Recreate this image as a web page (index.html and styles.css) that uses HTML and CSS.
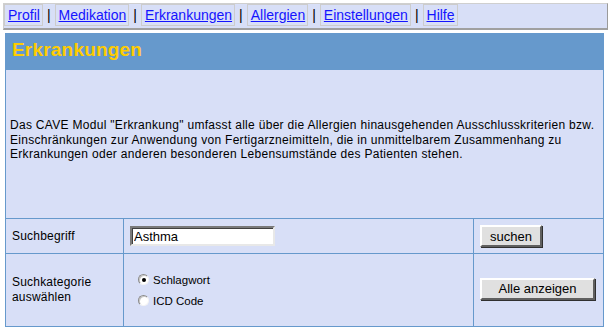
FILE: index.html
```html
<!DOCTYPE html>
<html lang="de">
<head>
    <meta charset="UTF-8">
    <title>CAVE - Erkrankungen</title>
    <link rel="stylesheet" href="styles.css">
</head>
<body>
    <div class="nav">
        <a class="tab" href="#">Profil</a><span class="sep">|</span>
        <a class="tab" href="#">Medikation</a><span class="sep">|</span>
        <a class="tab" href="#">Erkrankungen</a><span class="sep">|</span>
        <a class="tab" href="#">Allergien</a><span class="sep">|</span>
        <a class="tab" href="#">Einstellungen</a><span class="sep">|</span>
        <a class="tab" href="#">Hilfe</a>
    </div>

    <div class="panel">
        <h1 class="panel-head">Erkrankungen</h1>
        <form class="form" onsubmit="return false">
            <table class="grid">
                <tr>
                    <td class="desc" colspan="3">
                        Das CAVE Modul "Erkrankung" umfasst alle über die Allergien hinausgehenden Ausschlusskriterien bzw.<br>
                        Einschränkungen zur Anwendung von Fertigarzneimitteln, die in unmittelbarem Zusammenhang zu<br>
                        Erkrankungen oder anderen besonderen Lebensumstände des Patienten stehen.
                    </td>
                </tr>
                <tr class="row-search">
                    <td class="label">Suchbegriff</td>
                    <td class="field"><input class="text" type="text" value="Asthma"></td>
                    <td class="action"><button class="btn btn-search">suchen</button></td>
                </tr>
                <tr class="row-category">
                    <td class="label">Suchkategorie<br>auswählen</td>
                    <td class="field">
                        <label class="option"><input type="radio" name="kat" checked> Schlagwort</label>
                        <label class="option"><input type="radio" name="kat"> ICD Code</label>
                    </td>
                    <td class="action"><button class="btn btn-all">Alle anzeigen</button></td>
                </tr>
            </table>
        </form>
    </div>
</body>
</html>
```

FILE: styles.css
```css
body {
    margin: 3px 0 0 3px;
    background-color: #ffffff;
    font-family: "Liberation Sans", Arial, sans-serif;
    color: #000000;
}
.nav {
    width: 603px;
    display: flex;
    align-items: center;
    background-color: #d8dff7;
    border-top: 1px solid #cfcfcf;
    border-left: 1px solid #cfcfcf;
    border-right: 1px solid #9a9a9a;
    border-bottom: 2px solid #a0a0a0;
    padding-bottom: 2px;
    font-size: 14px;
}
.tab {
    display: block;
    height: 20px;
    line-height: 20px;
    padding: 0 2px 0 3px;
    border: 1px solid #cccccc;
    color: #1414ff;
    text-decoration: underline;
}
.sep {
    padding: 0 4px 0 4px;
    line-height: 20px;
}
.panel {
    width: 599px;
    margin: 3px 0 0 2px;
}
.panel-head {
    margin: 0;
    height: 36px;
    line-height: 34px;
    padding-left: 7px;
    background-color: #6699cc;
    color: #ffcc00;
    font-size: 19px;
    font-weight: bold;
    letter-spacing: 0.2px;
}
.form {
    margin: 0;
}
.grid {
    width: 100%;
    border-collapse: collapse;
    background-color: #d8dff7;
    font-size: 11.5px;
}
.grid td {
    border: 1px solid #6699cc;
    padding: 0 6px;
    vertical-align: middle;
}
.desc {
    height: 140px;
    line-height: 14.5px;
    padding: 0 4px 8px 4px !important;
    font-size: 12px;
    letter-spacing: 0.3px;
}
.row-search td {
    height: 34px;
}
.row-category td {
    height: 72px;
}
.label {
    width: 105px;
    line-height: 15px;
    font-size: 12px;
    letter-spacing: 0.2px;
}
.action {
    width: 117px;
}
.text {
    width: 137px;
    height: 16px;
    margin: 0;
    padding: 0 2px;
    border-style: solid;
    border-width: 2px;
    border-color: #7a7a7a #e8e8e8 #e8e8e8 #7a7a7a;
    box-shadow: inset 1px 1px 0 #404040;
    background-color: #ffffff;
    font-family: "Liberation Sans", Arial, sans-serif;
    font-size: 13px;
    color: #000000;
    outline: none;
}
.option {
    display: flex;
    align-items: center;
    gap: 4px;
    height: 21px;
    padding-left: 8px;
}
.option input {
    appearance: none;
    width: 11px;
    height: 11px;
    margin: 0;
    border-radius: 50%;
    background-color: #ffffff;
    border: 1px solid;
    border-color: #8a8a8a #f4f4f4 #f4f4f4 #8a8a8a;
    box-shadow: inset 1px 1px 0 #c8c8c8;
    display: grid;
    place-content: center;
}
.option input:checked::before {
    content: "";
    width: 4px;
    height: 4px;
    border-radius: 50%;
    background-color: #000000;
}
.btn {
    height: 22px;
    padding: 0;
    background-color: #e0e0e0;
    border-style: solid;
    border-width: 2px;
    border-color: #ffffff #606060 #606060 #ffffff;
    box-shadow: 1px 1px 0 #303030;
    font-family: "Liberation Sans", Arial, sans-serif;
    font-size: 13px;
    color: #000000;
}
.btn-search {
    width: 62px;
}
.btn-all {
    width: 115px;
    margin-top: -3px;
}
```
